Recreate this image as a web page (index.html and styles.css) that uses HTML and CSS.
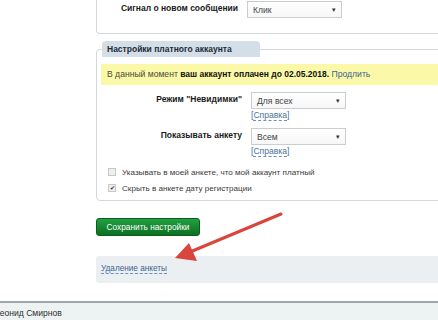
FILE: index.html
```
<!DOCTYPE html>
<html>
<head>
    <meta charset="utf-8">
    <link rel="stylesheet" href="styles.css">
</head>
<body>
    <div class="content">
        <div class="panel panel-cut">
            <div class="form-row">
                <div class="form-label">Сигнал о новом сообщении</div>
                <div class="form-field">
                    <div class="select">Клик<span class="select-arrow">&#9662;</span></div>
                </div>
            </div>
        </div>

        <fieldset class="panel">
            <legend>Настройки платного аккаунта</legend>
            <div class="notice">
                В данный момент <b>ваш аккаунт оплачен до 02.05.2018.</b> <a href="#">Продлить</a>
            </div>
            <div class="form-row">
                <div class="form-label">Режим "Невидимки"</div>
                <div class="form-field">
                    <div class="select">Для всех<span class="select-arrow">&#9662;</span></div>
                    <a class="help" href="#">[<span>Справка</span>]</a>
                </div>
            </div>
            <div class="form-row">
                <div class="form-label">Показывать анкету</div>
                <div class="form-field">
                    <div class="select">Всем<span class="select-arrow">&#9662;</span></div>
                    <a class="help" href="#">[<span>Справка</span>]</a>
                </div>
            </div>
            <label class="check-row"><span class="checkbox"></span>Указывать в моей анкете, что мой аккаунт платный</label>
            <label class="check-row"><span class="checkbox checked">&#10004;</span>Скрыть в анкете дату регистрации</label>
        </fieldset>

        <button class="btn-save">Сохранить настройки</button>

        <div class="delete-box">
            <a href="#" class="dashed">Удаление анкеты</a>
        </div>
    </div>

    <div class="footer">Леонид Смирнов</div>

    <svg class="arrow" width="438" height="320" viewBox="0 0 438 320">
        <line x1="281" y1="214" x2="190" y2="252" stroke="#d9443c" stroke-width="3" stroke-linecap="round"/>
        <polygon points="175,258 189,243 197,261" fill="#d9443c"/>
    </svg>
</body>
</html>
```

FILE: styles.css
```
body {
    margin: 0;
    width: 438px;
    height: 320px;
    overflow: hidden;
    background: #fff;
    font-family: "Liberation Sans", Arial, sans-serif;
    font-size: 8.6px;
    color: #333;
}

a {
    color: #3a6592;
    text-decoration: none;
}

b,
legend,
.form-label {
    font-weight: bold;
    font-size: 8.5px;
}

.content {
    padding-left: 96px;
    width: 520px;
}

.panel {
    border: 1px solid #d3d8dc;
    border-radius: 4px;
    margin: 0;
    min-width: 0;
}

.panel-cut {
    border-top: none;
    border-radius: 0 0 4px 4px;
    height: 34px;
    padding-top: 1px;
    box-sizing: border-box;
}

fieldset.panel {
    margin-top: 7px;
    padding: 0 0 4px 4px;
}

legend {
    margin-left: 1px;
    padding: 0 6px 0 5px;
    width: 147px;
    height: 16px;
    line-height: 16px;
    background: #d3dee8;
    border-radius: 4px 4px 0 0;
    color: #1d2a36;
    white-space: nowrap;
}

.notice {
    margin-top: 7px;
    height: 21px;
    line-height: 21px;
    padding-left: 6px;
    background: #fbf9a8;
    color: #4a4a3a;
}

.notice b {
    color: #111;
}

.form-row {
    display: grid;
    grid-template-columns: 141px 1fr;
    column-gap: 9px;
    margin-top: 7px;
}

.panel-cut .form-row {
    margin-top: 0;
}

.form-label {
    text-align: right;
    color: #1b1b1b;
    line-height: 15px;
    white-space: nowrap;
}

.select {
    position: relative;
    width: 95px;
    height: 17px;
    box-sizing: border-box;
    border: 1px solid #c9cdd1;
    background: linear-gradient(#fff, #f7f7f7);
    padding-left: 5px;
    line-height: 16px;
    color: #444;
}

.select-arrow {
    position: absolute;
    right: 5px;
    top: 0;
    font-size: 7px;
    color: #333;
}

.help {
    display: block;
    line-height: 12px;
    color: #4a72a0;
}

.help span {
    border-bottom: 1px dashed #6f8fb4;
}

.check-row {
    display: flex;
    align-items: center;
    height: 16px;
    padding-left: 7px;
    font-size: 8.1px;
    color: #3a3a3a;
}

.check-row:first-of-type {
    margin-top: 7px;
}

.checkbox {
    width: 6px;
    height: 6px;
    border: 1px solid #c8c8c8;
    background: #efefef;
    margin-right: 6px;
    font-size: 6px;
    line-height: 6px;
    text-align: center;
    color: #333;
}

.btn-save {
    display: block;
    margin-top: 17px;
    width: 104px;
    height: 18px;
    padding: 0;
    border: 1px solid #0b5d1c;
    border-radius: 3px;
    background: linear-gradient(#23a042, #0b6f22);
    color: #fff;
    font-family: inherit;
    font-size: 8.3px;
}

.delete-box {
    margin-top: 20px;
    height: 27px;
    line-height: 25px;
    padding-left: 5px;
    background: #ebeff1;
    border-radius: 3px;
    font-size: 8.2px;
}

.dashed {
    border-bottom: 1px dashed #6f8fb4;
}

.footer {
    margin-top: 18px;
    border-top: 2px solid #9ea8ad;
    background: #edf2f2;
    height: 40px;
    padding-top: 5px;
    text-indent: -6px;
    color: #333;
}

.arrow {
    position: absolute;
    left: 0;
    top: 0;
    pointer-events: none;
}
```
